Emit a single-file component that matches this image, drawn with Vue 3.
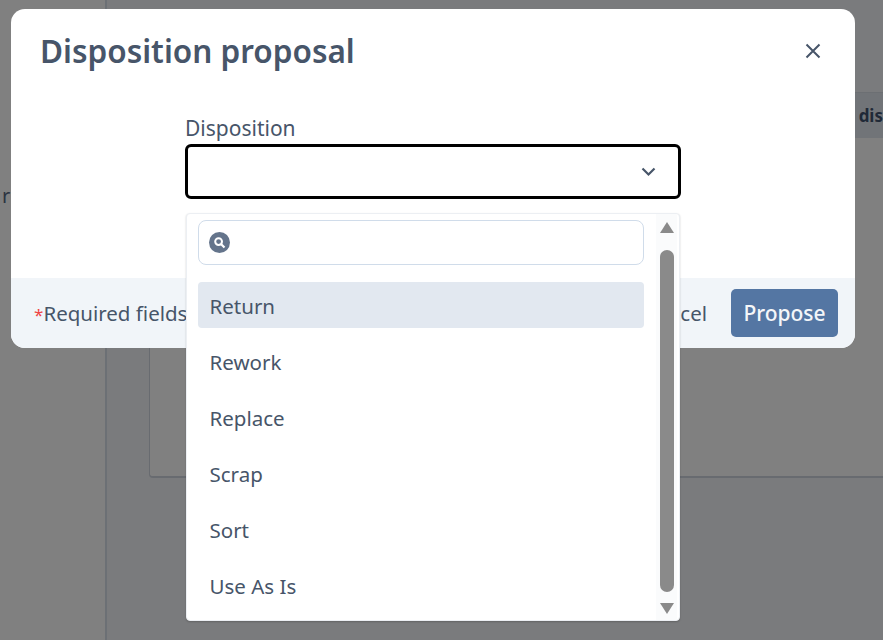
<template>
  <div class="page">
    <aside class="sidebar">
      <span class="cut-label">r</span>
    </aside>
    <main class="content">
      <div class="table-head"><span>dis</span></div>
      <div class="panel-wrap">
        <div class="panel"></div>
      </div>
    </main>

    <div class="modal">
      <header class="modal-head">
        <h2>Disposition proposal</h2>
        <button class="close" aria-label="Close">
          <svg width="16" height="16" viewBox="0 0 16 16">
            <path d="M1.5 1.5 14.5 14.5M14.5 1.5 1.5 14.5" fill="none" stroke="#475569" stroke-width="2" />
          </svg>
        </button>
      </header>

      <div class="modal-body">
        <div class="field">
          <label>Disposition</label>
          <div class="select">
            <svg width="15" height="10" viewBox="0 0 15 10">
              <path d="M1.5 1.5 7.5 7.5l6-6" fill="none" stroke="#475569" stroke-width="2.2" />
            </svg>
          </div>

          <div class="dropdown">
            <div class="list">
              <div class="search">
                <svg width="21" height="21" viewBox="0 0 21 21">
                  <circle cx="10.5" cy="10.5" r="10.5" fill="#64748b" />
                  <circle cx="9.6" cy="9.6" r="3.4" fill="none" stroke="#fff" stroke-width="2" />
                  <path d="m12.2 12.2 3.3 3.3" stroke="#fff" stroke-width="2.2" />
                </svg>
              </div>
              <div
                v-for="(option, index) in options"
                :key="option"
                class="option"
                :class="{ active: index === 0 }"
              >
                {{ option }}
              </div>
            </div>
            <div class="scrollbar">
              <span class="arrow up"></span>
              <span class="thumb"></span>
              <span class="arrow down"></span>
            </div>
          </div>
        </div>
      </div>

      <footer class="modal-foot">
        <span class="required"><em>*</em>Required fields</span>
        <div class="actions">
          <span class="cancel">Cancel</span>
          <button class="propose">Propose</button>
        </div>
      </footer>
    </div>
  </div>
</template>

<script setup>
const options = ["Return", "Rework", "Replace", "Scrap", "Sort", "Use As Is"];
</script>

<style scoped>
.page {
  position: relative;
  display: flex;
  width: 883px;
  height: 640px;
  overflow: hidden;
  background-color: #7a7b7d;
  font-family: "Noto Sans", sans-serif;
  color: #475569;
}

.sidebar {
  box-sizing: border-box;
  width: 107px;
  height: 640px;
  padding: 182px 0 0 2px;
  background-color: #808080;
  border-right: 2px solid #6c7075;
}

.cut-label {
  font-size: 20px;
  color: #2c3440;
}

.content {
  flex: 1;
  padding-top: 92px;
}

.table-head {
  display: flex;
  justify-content: flex-end;
  align-items: center;
  box-sizing: border-box;
  height: 46px;
  background-color: #717478;
  border-top: 1px solid #6c6f73;
}

.table-head span {
  font-size: 17px;
  font-weight: 700;
  color: #1f2937;
}

.panel-wrap {
  padding-left: 42px;
}

.panel {
  box-sizing: border-box;
  height: 340px;
  background-color: #808080;
  border-left: 1px solid #686b70;
  border-bottom: 2px solid #686b70;
  border-bottom-left-radius: 4px;
}

.modal {
  position: absolute;
  left: 11px;
  top: 9px;
  display: flex;
  flex-direction: column;
  width: 844px;
  height: 339px;
  background-color: #fff;
  border-radius: 14px;
}

.modal-head {
  display: flex;
  justify-content: space-between;
  align-items: center;
  height: 83px;
  padding: 0 34px 0 29px;
}

.modal-head h2 {
  margin: 0;
  font-size: 31.5px;
  font-weight: 600;
  line-height: 83px;
  color: #475569;
}

.close {
  display: flex;
  padding: 0;
  border: none;
  background: none;
}

.modal-body {
  flex: 1;
  padding-left: 174px;
}

.field {
  position: relative;
  width: 496px;
}

.field label {
  display: block;
  box-sizing: border-box;
  height: 52px;
  padding-top: 23px;
  font-size: 21px;
  line-height: 27px;
  color: #475569;
}

.select {
  display: flex;
  justify-content: flex-end;
  align-items: center;
  box-sizing: border-box;
  height: 55px;
  padding-right: 22px;
  background-color: #fff;
  border: 3px solid #000;
  border-radius: 6px;
}

.dropdown {
  position: absolute;
  left: 1px;
  top: 121px;
  z-index: 2;
  display: flex;
  box-sizing: border-box;
  width: 494px;
  height: 408px;
  background-color: #fff;
  border: 1px solid #eceff3;
  border-radius: 4px;
  box-shadow: 0 1px 2px rgba(0, 0, 0, 0.2);
}

.list {
  flex: 1;
  padding: 6px 12px 0 11px;
}

.search {
  display: flex;
  align-items: center;
  box-sizing: border-box;
  height: 45px;
  margin-bottom: 17px;
  padding-left: 9.5px;
  border: 1.5px solid #d0dcea;
  border-radius: 8px;
}

.option {
  display: flex;
  align-items: center;
  box-sizing: border-box;
  height: 46px;
  margin-bottom: 10px;
  padding: 2px 0 0 11.5px;
  border-radius: 4px;
  font-size: 20.5px;
  color: #475569;
}

.option.active {
  background-color: #e2e8f0;
}

.scrollbar {
  display: flex;
  flex-direction: column;
  align-items: center;
  box-sizing: border-box;
  width: 21px;
  margin-right: 2px;
  padding: 8px 0 6px;
  background-color: #fafbfc;
}

.thumb {
  flex: 1;
  width: 14px;
  margin: 17px 0 11px;
  background-color: #8a8a8a;
  border-radius: 7px;
}

.arrow {
  width: 0;
  height: 0;
  border-left: 7.5px solid transparent;
  border-right: 7.5px solid transparent;
}

.arrow.up {
  border-bottom: 11px solid #8a8a8a;
}

.arrow.down {
  border-top: 11px solid #8a8a8a;
}

.modal-foot {
  display: flex;
  justify-content: space-between;
  align-items: center;
  box-sizing: border-box;
  height: 70px;
  padding: 0 17px 0 23px;
  background-color: #f1f5f9;
  border-radius: 0 0 14px 14px;
}

.required {
  font-size: 20.5px;
  color: #475569;
}

.required em {
  font-size: 17px;
  font-style: normal;
  color: #ef4444;
}

.actions {
  display: flex;
  align-items: center;
  gap: 24px;
}

.cancel {
  font-size: 20.5px;
  color: #475569;
}

.propose {
  width: 107px;
  height: 48px;
  padding: 0;
  border: none;
  border-radius: 5px;
  background-color: #5476a3;
  color: #f4f6f9;
  font-family: inherit;
  font-size: 21px;
  font-weight: 500;
}
</style>
